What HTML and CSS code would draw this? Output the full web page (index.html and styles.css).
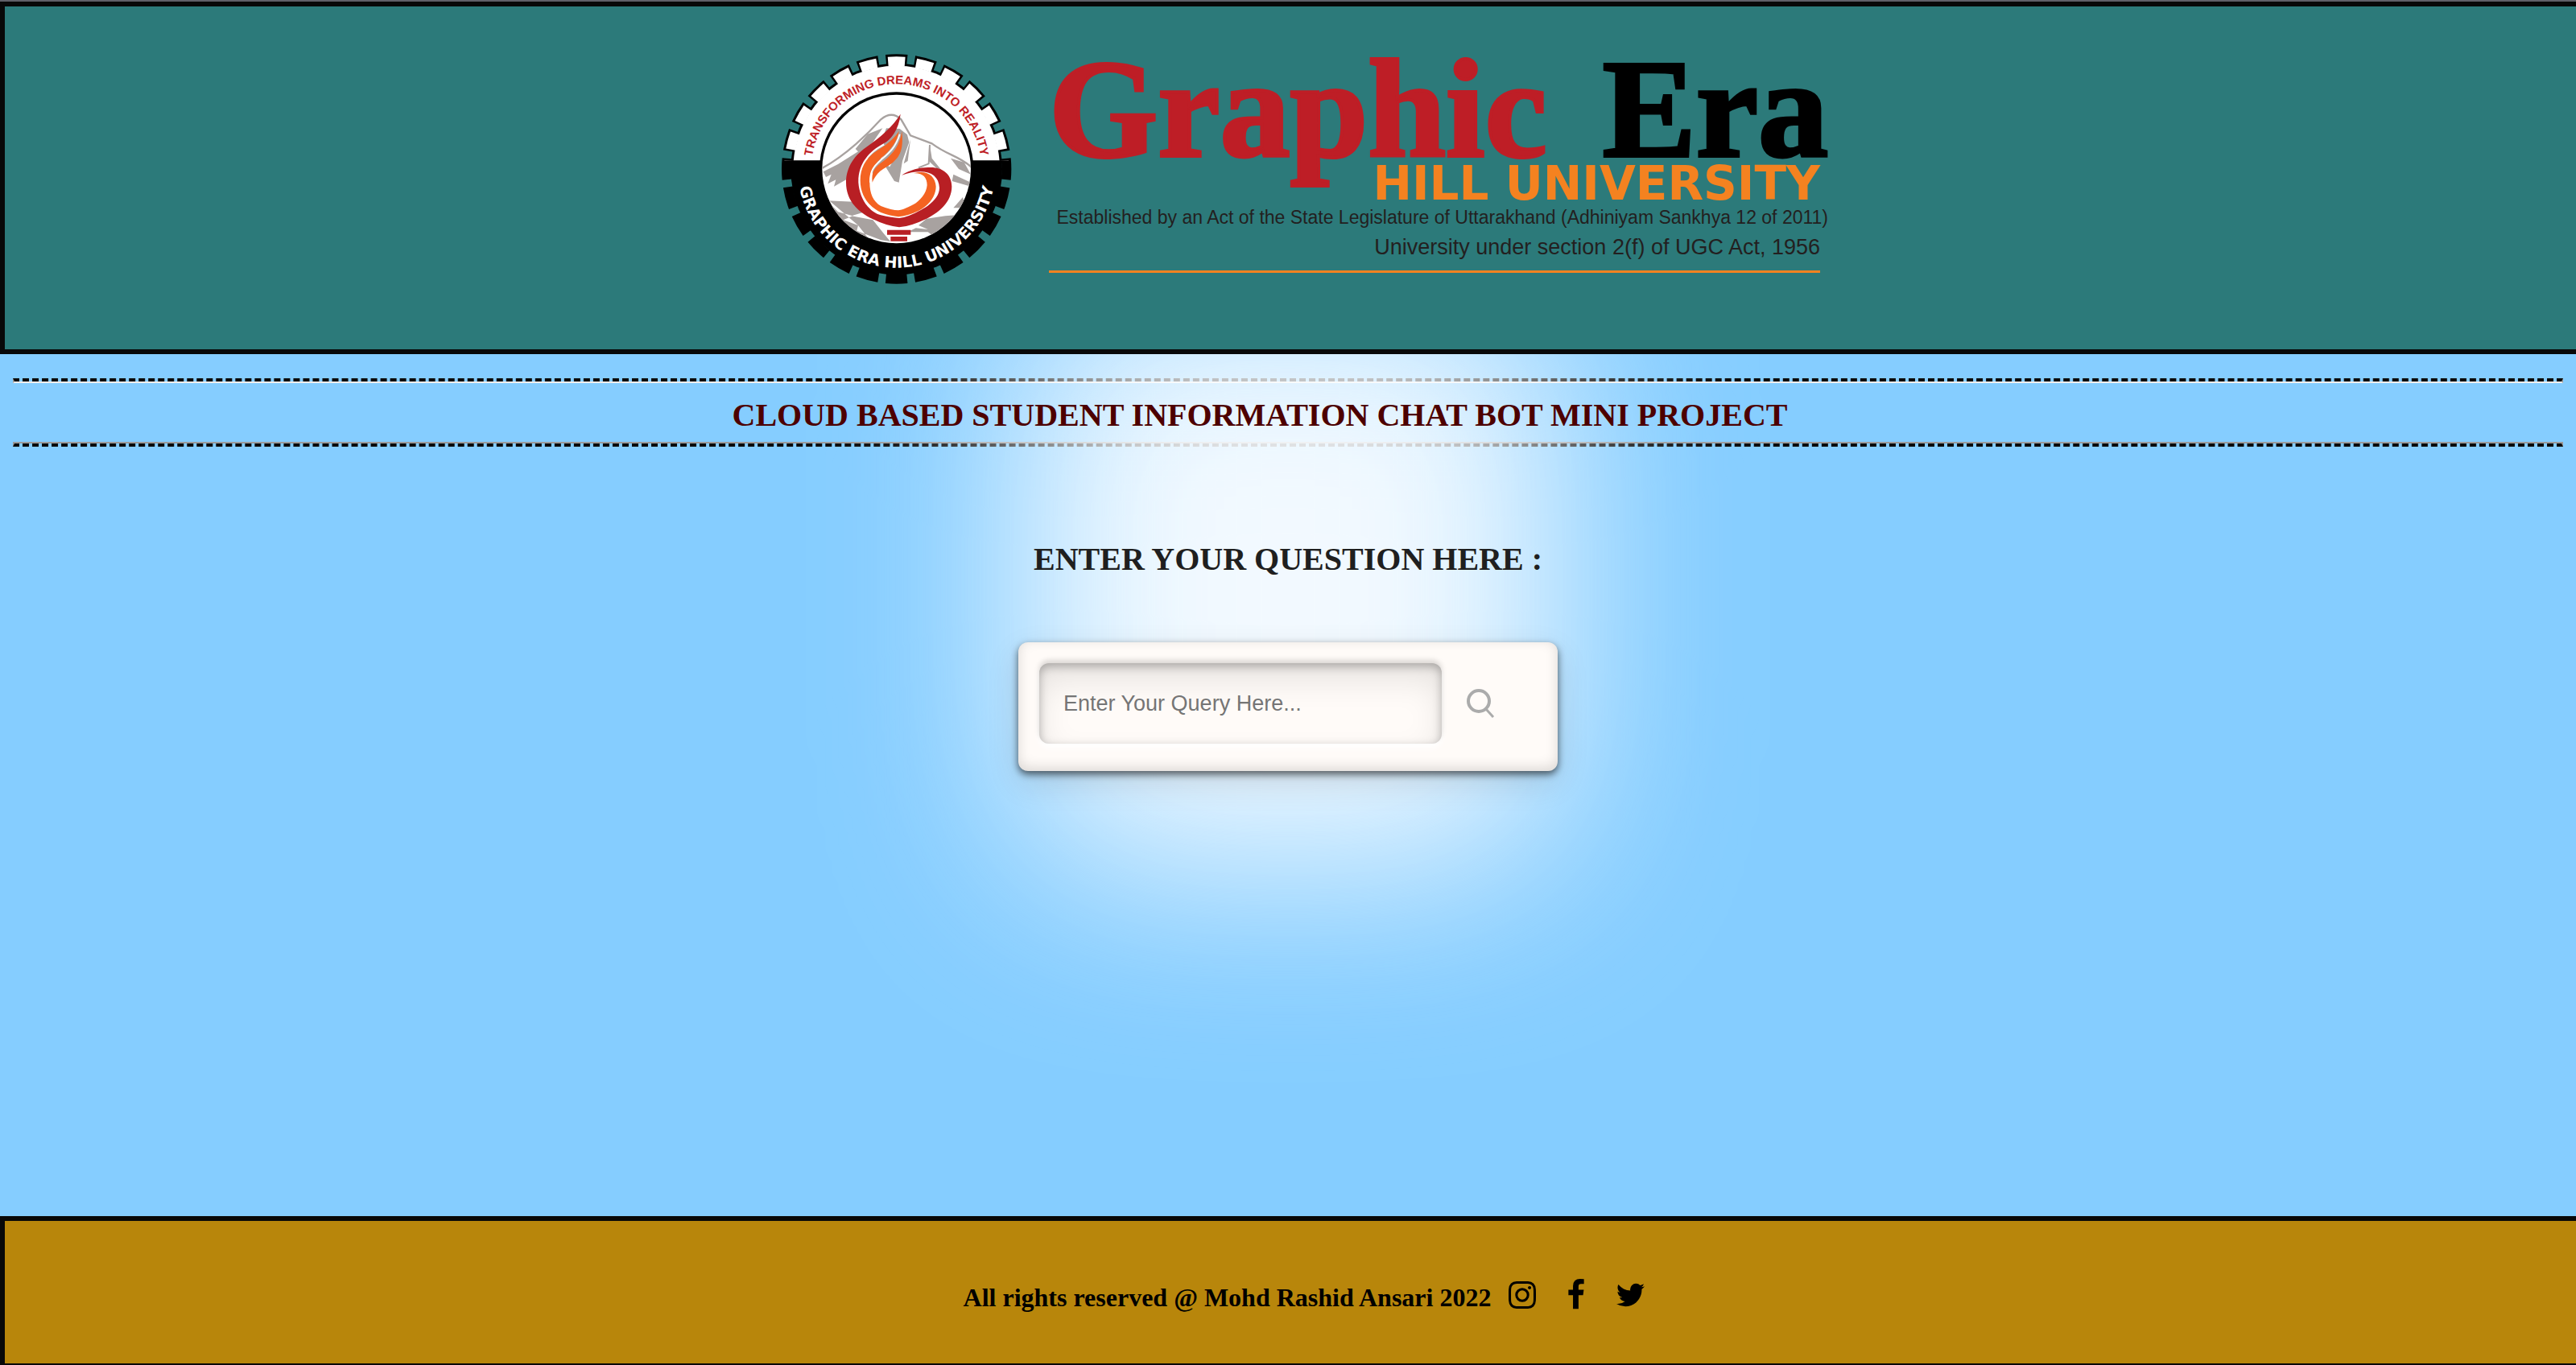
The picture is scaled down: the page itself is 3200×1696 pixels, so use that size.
FILE: index.html
```html
<!DOCTYPE html>
<html lang="en">
<head>
  <meta charset="utf-8">
  <title>Student Information Chat Bot</title>
  <link rel="stylesheet" href="styles.css">
</head>
<body>
  <header class="banner">
    <svg class="emblem" viewBox="0 0 990 960" role="img" aria-label="University emblem">
      <defs>
        <clipPath id="upper"><rect x="0" y="0" width="990" height="448"/></clipPath>
        <clipPath id="disc"><circle cx="488" cy="480" r="277"/></clipPath>
        <path id="arc-top" d="M171 480A317 317 0 0 1 805 480"/>
        <path id="arc-bottom" d="M120 440L120 480A368 368 0 0 0 856 480L856 440"/>
      </defs>
      <circle cx="488" cy="480" r="394"/>
      <circle cx="488" cy="480" r="410" fill="none" stroke="#000" stroke-width="36" pathLength="2400" stroke-dasharray="74 26" stroke-dashoffset="37"/>
      <g clip-path="url(#upper)">
        <circle cx="488" cy="480" r="385" fill="#fff"/>
        <circle cx="488" cy="480" r="401" fill="none" stroke="#fff" stroke-width="36" pathLength="2400" stroke-dasharray="60 40" stroke-dashoffset="30"/>
      </g>
      <circle cx="488" cy="480" r="287"/>
      <circle cx="488" cy="480" r="277" fill="#fff"/>
      <g clip-path="url(#disc)" fill="#a8a2a0">
        <path d="M205 480C300 430 390 340 430 295Q470 262 505 295L540 355L620 385C680 430 720 430 770 475" fill="none" stroke="#a8a2a0" stroke-width="7"/>
        <path d="M436 328L380 350L335 405L345 415L270 462L215 490L225 510L245 500L232 535L262 520L255 545L300 520L330 450L400 380Z"/>
        <path d="M450 328L500 330L528 352L535 380L510 450L497 530L480 525L440 460L400 500L380 440L430 380Z"/>
        <path d="M460 390L430 440M500 400L460 470M445 345L410 400" stroke="#fff" stroke-width="6"/>
        <path d="M612 390L620 440L660 490L640 480L608 450ZM690 440L740 455L765 500L720 480ZM700 500L765 530V545L695 525Z"/>
        <path d="M612 390L608 460L570 475" fill="none" stroke="#a8a2a0" stroke-width="6"/>
        <path d="M230 598L330 602L370 640L320 655L400 670L440 720L465 750L430 745L340 710L345 690L290 670L325 655L270 640ZM240 600L250 680L400 760L345 690Z"/>
        <path d="M600 665L670 655L735 650L690 710L640 740L605 715L530 715L560 700L605 705L570 690Z"/>
        <path d="M735 585L700 625L745 625ZM540 370L530 450L515 460Z"/>
      </g>
      <path fill="none" stroke="#fff" stroke-width="14" d="M440 385C380 415 345 465 345 530C345 600 400 663 498 663C590 650 648 600 648 550C645 510 610 480 507 503"/>
      <path fill="#b81f24" d="M503 275C497 335 465 372 440 385C385 415 345 460 346 530C350 590 385 640 430 652Q470 662 498 663Q530 660 580 632C625 608 648 580 648 550C645 492 590 475 507 503C540 482 580 473 610 474C660 472 694 500 694 545C694 600 650 640 600 665Q540 694 498 697Q450 692 400 667C335 636 300 590 300 530C300 470 335 425 380 395C430 360 475 320 503 275Z"/>
      <path fill="#f46322" d="M498 338C470 378 440 395 415 412C370 442 353 480 353 522C353 580 385 620 430 642Q465 655 495 658Q530 655 570 636C610 615 635 580 635 545C633 505 600 482 552 496C585 494 602 510 602 540C600 570 575 600 550 613Q510 634 495 634Q470 634 430 618C400 600 388 570 388 530C388 490 400 470 430 440C465 410 490 380 498 338Z"/>
      <path fill="none" stroke="#fff" stroke-width="6" d="M500 350C485 400 460 420 430 446C400 472 390 490 390 530"/>
      <path fill="#f46322" d="M508 340C514 400 505 430 475 455C445 480 420 480 398 530C394 490 405 475 440 450C480 420 500 390 508 340Z"/>
      <path fill="#b81f24" d="M453 707h88v18h-88zM466 732h62v17h-62z"/>
      <text class="motto"><textPath href="#arc-top" startOffset="50%">TRANSFORMING DREAMS INTO REALITY</textPath></text>
      <text class="ring-name"><textPath href="#arc-bottom" startOffset="50%">GRAPHIC ERA HILL UNIVERSITY</textPath></text>
    </svg>
    <div class="wordmark">
      <div class="name"><span>Graphic</span> <span class="era">Era</span></div>
      <div class="sub">HILL UNIVERSITY</div>
      <div class="act">Established by an Act of the State Legislature of Uttarakhand (Adhiniyam Sankhya 12 of 2011)</div>
      <div class="section">University under section 2(f) of UGC Act, 1956</div>
    </div>
  </header>

  <main class="content">
    <hr class="rule rule-top">
    <h1 class="title">CLOUD BASED STUDENT INFORMATION CHAT BOT MINI PROJECT</h1>
    <hr class="rule rule-bottom">
    <h2 class="prompt"><label for="query">ENTER YOUR QUESTION HERE :</label></h2>
    <form class="search">
      <input class="query" id="query" type="text" placeholder="Enter Your Query Here...">
      <button class="go" type="button" aria-label="Search">
        <svg viewBox="0 0 36 38" width="36" height="38" fill="none" stroke="#ababab">
          <circle cx="16" cy="16" r="13" stroke-width="4"/>
          <path d="M25 26L34 36" stroke-width="3"/>
        </svg>
      </button>
    </form>
  </main>

  <footer class="footer">
    <span>All rights reserved @ Mohd Rashid Ansari 2022</span>
    <a class="social" href="#" aria-label="Instagram"><svg viewBox="128 0 1536 1792" width="34" height="40"><path d="M1152 896q0-106-75-181t-181-75-181 75-75 181 75 181 181 75 181-75 75-181zm138 0q0 164-115 279t-279 115-279-115-115-279 115-279 279-115 279 115 115 279zm108-410q0 38-27 65t-65 27-65-27-27-65 27-65 65-27 65 27 27 65zm-502-220q-7 0-76.500-.5t-105.500 0-96.500 3-103 10-71.500 18.500q-50 20-88 58t-58 88q-11 29-18.500 71.500t-10 103-3 96.500 0 105.500.5 76.500-.5 76.500 0 105.500 3 96.500 10 103 18.500 71.500q20 50 58 88t88 58q29 11 71.500 18.500t103 10 96.500 3 105.500 0 76.500-.5 76.500.5 105.500 0 96.500-3 103-10 71.500-18.500q50-20 88-58t58-88q11-29 18.500-71.500t10-103 3-96.500 0-105.500-.5-76.500.5-76.500 0-105.500-3-96.500-10-103-18.500-71.500q-20-50-58-88t-88-58q-29-11-71.500-18.500t-103-10-96.500-3-105.500 0-76.500.5zm768 630q0 229-5 317-10 208-124 322t-322 124q-88 5-317 5t-317-5q-208-10-322-124t-124-322q-5-88-5-317t5-317q10-208 124-322t322-124q88-5 317-5t317 5q208 10 322 124t124 322q5 88 5 317z"/></svg></a>
    <a class="social" href="#" aria-label="Facebook"><svg viewBox="479 0 864 1792" width="20" height="40"><path d="M1343 12v264h-157q-86 0-116 36t-30 108v189h293l-39 296h-254v759h-306v-759h-255v-296h255v-218q0-186 104-288.500t277-102.500q147 0 228 12z"/></svg></a>
    <a class="social" href="#" aria-label="Twitter"><svg viewBox="108 0 1576 1792" width="35" height="40"><path d="M1684 408q-67 98-162 167 1 14 1 42 0 130-38 259.500t-115.500 248.500-184.500 210.500-258 146-323 54.500q-271 0-496-145 35 4 78 4 225 0 401-138-105-2-188-64.500t-114-159.500q33 5 61 5 43 0 85-11-112-23-185.500-111.500t-73.500-205.500v-4q68 38 146 41-66-44-105-115t-39-154q0-88 44-163 121 149 294.500 238.500t371.500 99.500q-8-38-8-74 0-134 94.500-228.500t228.500-94.500q140 0 236 102 109-21 205-78-37 115-142 178 93-10 186-50z"/></svg></a>
  </footer>
</body>
</html>
```
FILE: styles.css
```css
* {
  box-sizing: border-box;
}

body {
  margin: 0;
  min-height: 100vh;
  display: flex;
  flex-direction: column;
  background: #85cdff;
  border-top: 2px solid #606068;
  font-family: "Liberation Serif", "Times New Roman", serif;
}

.banner {
  position: relative;
  z-index: 2;
  display: flex;
  justify-content: center;
  align-items: flex-start;
  gap: 22px;
  padding: 42px 0 64px 16px;
  background: #2c7a7a;
  border: 6px solid #080808;
  border-right: 0;
}

.emblem {
  width: 330px;
  height: 320px;
}

.motto,
.ring-name {
  font-family: "Liberation Sans", Arial, sans-serif;
  font-weight: bold;
  text-anchor: middle;
}

.motto {
  font-size: 45px;
  fill: #be1e26;
}

.ring-name {
  font-family: "DejaVu Sans", sans-serif;
  font-size: 58px;
  fill: #fff;
}

.wordmark {
  display: flex;
  flex-direction: column;
  align-items: flex-end;
  width: 968px;
  padding-top: 18px;
  color: #231f20;
  font-family: "Liberation Sans", Arial, sans-serif;
  white-space: nowrap;
}

.name {
  display: flex;
  justify-content: space-between;
  align-self: stretch;
  color: #be1e26;
  font: bold 174px/136px "Liberation Serif", "Times New Roman", serif;
  -webkit-text-stroke: 4px currentColor;
}

.era {
  color: #000;
}

.sub {
  padding-right: 10px;
  color: #f48220;
  font: bold 58px/48px "DejaVu Sans", sans-serif;
}

.act {
  font-size: 23px;
  line-height: 37px;
}

.section {
  align-self: stretch;
  margin-right: 10px;
  padding-bottom: 10px;
  border-bottom: 3px solid #f48220;
  font-size: 27px;
  line-height: 37px;
  text-align: right;
}

.content {
  position: relative;
  flex: 1;
  padding: 30px 16px 0;
  overflow: hidden;
}

/* Soft light behind the search form */
.content::before {
  content: "";
  position: absolute;
  z-index: 0;
  top: -80px;
  left: 50%;
  width: 668px;
  height: 720px;
  margin-left: -334px;
  background: #fbfdff;
  border-radius: 120px;
  filter: blur(120px);
  opacity: .93;
}

.rule {
  height: 6px;
  margin: 0;
  border: 2px solid #9a9a9a;
}

.rule-top {
  border-top: 4px dashed #0a0a0a;
  border-bottom-color: #eee;
}

.rule-bottom {
  border-bottom: 4px dashed #0a0a0a;
}

.title,
.prompt {
  position: relative;
  z-index: 1;
  margin: 0;
  font-size: 40px;
  text-align: center;
}

.title {
  padding: 17px 70px 10px 0;
  color: #4d0000;
  line-height: 46px;
}

.prompt {
  padding: 117px 0 80px;
  color: #1f1f1f;
  line-height: 46px;
}

.search {
  position: relative;
  z-index: 1;
  display: flex;
  align-items: center;
  gap: 30px;
  width: 670px;
  margin: 0 auto;
  padding: 26px 26px 34px;
  background: #fffbf8;
  border-radius: 12px;
  box-shadow: inset 0 -4px 16px rgba(0, 0, 0, .14), 0 4px 10px rgba(0, 0, 0, .6), 0 14px 40px rgba(0, 0, 0, .12);
}

.query {
  width: 500px;
  height: 100px;
  padding: 0 30px;
  background: #fffbf8;
  border: 0;
  border-radius: 12px;
  box-shadow: 0 -4px 6px rgba(0, 0, 0, .14), 0 5px 8px #fff, inset 0 4px 12px rgba(0, 0, 0, .28), inset 0 20px 40px rgba(0, 0, 0, .1);
  color: #333;
  font: 27px "Liberation Sans", Arial, sans-serif;
}

.query::placeholder {
  color: #757575;
  opacity: 1;
}

.go {
  display: flex;
  padding: 0;
  background: none;
  border: 0;
}

.footer {
  display: flex;
  justify-content: center;
  align-items: center;
  height: 185px;
  padding: 14px 0 0 52px;
  background: #b8860b;
  border: 6px solid #080808;
  border-width: 6px 0 2px 6px;
  color: #000;
  font-size: 32px;
  font-weight: bold;
}

.social {
  display: flex;
  margin: 0 18px 8px 22px;
  color: #000;
}
```
